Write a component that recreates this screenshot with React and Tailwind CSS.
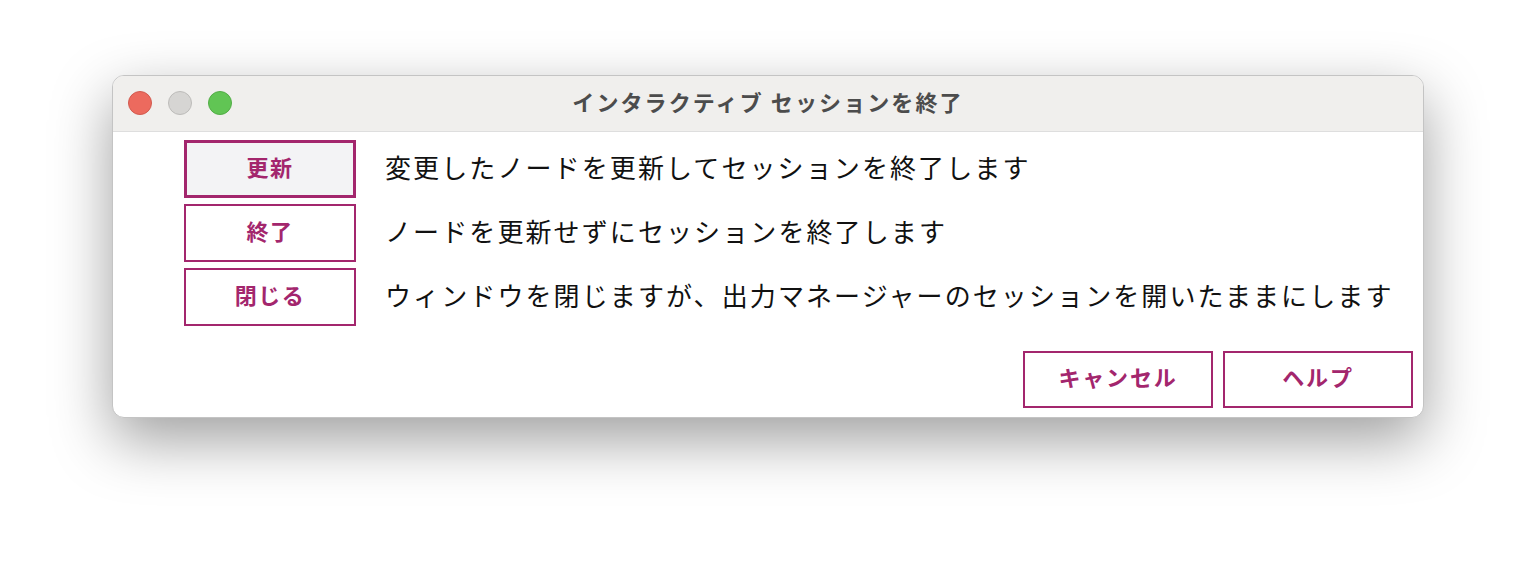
export default function App() {
  const font = { fontFamily: '"Noto Sans CJK JP", "Noto Sans", sans-serif' };
  const rows = [
    { label: "更新", text: "変更したノードを更新してセッションを終了します", selected: true },
    { label: "終了", text: "ノードを更新せずにセッションを終了します" },
    { label: "閉じる", text: "ウィンドウを閉じますが、出力マネージャーのセッションを開いたままにします" },
  ];
  return (
    <div className="w-[1536px] h-[566px] bg-white pt-[75px] pl-[112px]" style={font}>
      <div className="w-[1312px] h-[343px] rounded-[12px] border border-[#c4c4c4] bg-white shadow-[0_22px_60px_rgba(0,0,0,0.38)] overflow-hidden flex flex-col">
        <div className="relative h-[56px] bg-[#f0efed] border-b border-[#dedede] flex items-center justify-center shrink-0">
          <div className="absolute left-[15px] top-[15px] flex gap-[16px]">
            <div className="w-[24px] h-[24px] rounded-full bg-[#ec6a5e] border border-[#d25a4f]" />
            <div className="w-[24px] h-[24px] rounded-full bg-[#d6d5d3] border border-[#bdbcba]" />
            <div className="w-[24px] h-[24px] rounded-full bg-[#61c554] border border-[#52ad46]" />
          </div>
          <span className="mb-[5px] text-[22px] font-bold tracking-[2.1px] text-[#4c4c4c]">インタラクティブ セッションを終了</span>
        </div>
        <div className="flex flex-col gap-[6px] pt-[8px] pl-[71px]">
          {rows.map((r) => (
            <div key={r.label} className="flex items-center h-[58px]">
              <div
                className={
                  r.selected
                    ? "w-[172px] h-[58px] border-[3px] border-[#a3266d] bg-[#f3f3f5] flex items-center justify-center"
                    : "w-[172px] h-[58px] border-2 border-[#a3266d] bg-white flex items-center justify-center"
                }
              >
                <span className="mb-[6px] text-[22px] font-bold tracking-[1.5px] text-[#a3266d]">{r.label}</span>
              </div>
              <span className="ml-[29px] mb-[5px] text-[26px] tracking-[2.1px] text-[#111111]">{r.text}</span>
            </div>
          ))}
        </div>
        <div className="flex justify-end gap-[10px] pr-[10px] mt-[25px]">
          <div className="w-[190px] h-[57px] border-2 border-[#a3266d] flex items-center justify-center">
            <span className="mb-[6px] text-[22px] font-bold tracking-[1.8px] text-[#a3266d]">キャンセル</span>
          </div>
          <div className="w-[190px] h-[57px] border-2 border-[#a3266d] flex items-center justify-center">
            <span className="mb-[6px] text-[22px] font-bold tracking-[1.8px] text-[#a3266d]">ヘルプ</span>
          </div>
        </div>
      </div>
    </div>
  );
}
